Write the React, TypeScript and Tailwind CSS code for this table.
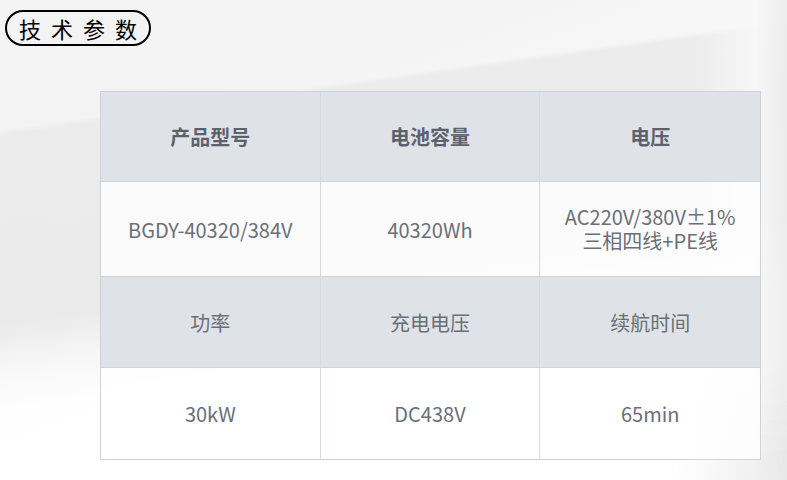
import React from "react";

const cjk = { fontFamily: '"Noto Sans CJK SC", "Noto Sans", sans-serif' };

function Cell({ children, head, bold, last }: { children: React.ReactNode; head?: boolean; bold?: boolean; last?: boolean }) {
  return (
    <div
      className={
        "flex items-center justify-center text-center text-[20px] leading-[25px] " +
        (last ? "" : "border-r border-[#d5dae2] ") +
        (head ? "bg-[#dfe3e8] " : "bg-white/80 ") +
        (bold ? "font-bold text-[#5c626c]" : "text-[#6a6f78]")
      }
    >
      {children}
    </div>
  );
}

export default function App() {
  return (
    <div
      className="relative w-[787px] h-[480px] overflow-hidden bg-[#f7f7f7]"
      style={cjk}
    >
      <div className="absolute inset-0 bg-[linear-gradient(160deg,#f4f4f4_0%,#f3f3f3_20%,#fbfbfb_60%,#ffffff_100%)]" />
      <div className="absolute inset-0 bg-[linear-gradient(172deg,transparent_0%,transparent_22%,#ebebeb_23%,#e9e9e9_55%,#f6f6f6_62%,#ffffff_70%,#ffffff_100%)] opacity-90" />
      <div className="absolute inset-0 bg-[linear-gradient(90deg,rgba(255,255,255,0)_0%,rgba(255,255,255,0)_88%,rgba(248,248,248,0.9)_96%,rgba(236,236,236,0.9)_100%)]" />
      <div className="absolute inset-0 bg-[linear-gradient(180deg,rgba(220,220,220,0)_0%,rgba(220,220,220,0)_75%,rgba(225,225,225,0.5)_100%)] [mask-image:linear-gradient(90deg,transparent_85%,black_100%)]" />
      <div className="relative flex flex-col">
        <div className="pl-[5px] pt-[10px]">
          <div className="inline-flex h-[36px] items-center rounded-full border-2 border-black pl-[12px] pr-[2px] text-[22px] tracking-[10px] text-black">
            技术参数
          </div>
        </div>
        <div className="ml-[100px] mt-[45px] w-[661px] border border-[#cdd3dc]">
          <div className="grid h-[90px] grid-cols-3 border-b border-[#d0d6de]">
            <Cell head bold>产品型号</Cell>
            <Cell head bold>电池容量</Cell>
            <Cell head bold last>电压</Cell>
          </div>
          <div className="grid h-[95px] grid-cols-3 border-b border-[#d0d6de]">
            <Cell>BGDY-40320/384V</Cell>
            <Cell>40320Wh</Cell>
            <Cell last>
              <div className="flex flex-col">
                <div className="leading-[24px]">AC220V/380V±1%</div>
                <div className="leading-[24px]">三相四线+PE线</div>
              </div>
            </Cell>
          </div>
          <div className="grid h-[91px] grid-cols-3 border-b border-[#d0d6de]">
            <Cell head>功率</Cell>
            <Cell head>充电电压</Cell>
            <Cell head last>续航时间</Cell>
          </div>
          <div className="grid h-[91px] grid-cols-3">
            <Cell>30kW</Cell>
            <Cell>DC438V</Cell>
            <Cell last>65min</Cell>
          </div>
        </div>
      </div>
    </div>
  );
}
